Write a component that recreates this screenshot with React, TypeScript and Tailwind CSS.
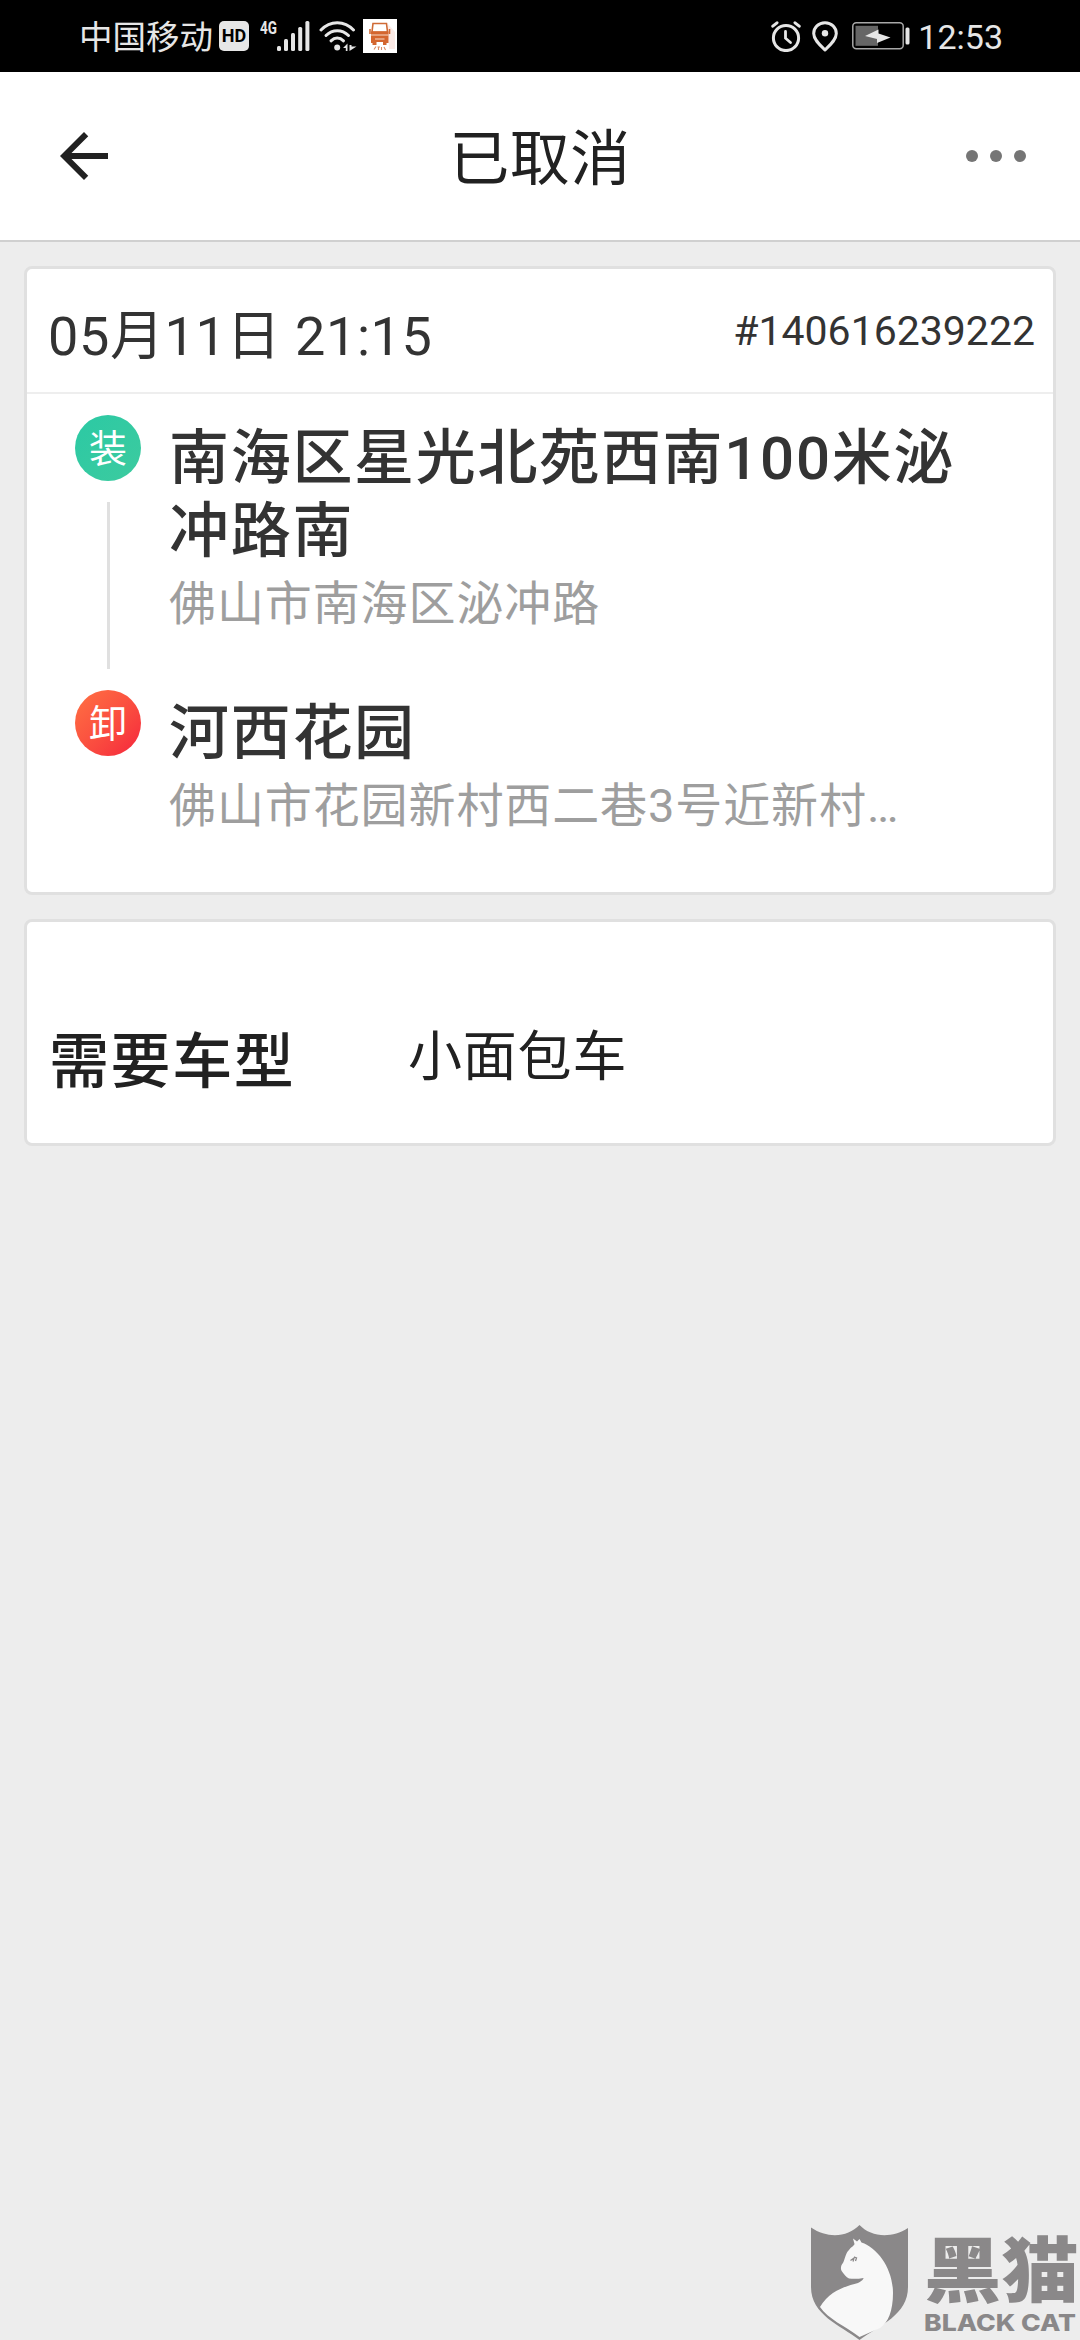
import React from 'react';

interface Stop {
  label: string;
  badgeClass: string;
  title: string;
  address: string;
}

const stops: Stop[] = [
  {
    label: '装',
    badgeClass: 'bg-linear-to-br from-[#2bc9a4] to-[#3ccb9f]',
    title: '南海区星光北苑西南100米泌冲路南',
    address: '佛山市南海区泌冲路',
  },
  {
    label: '卸',
    badgeClass: 'bg-linear-to-br from-[#ff7043] to-[#f51f3c]',
    title: '河西花园',
    address: '佛山市花园新村西二巷3号近新村…',
  },
];

const SignalIcon: React.FC = () => (
  <svg width="33" height="30" viewBox="0 0 33 30" fill="#e6e6e6">
    <rect x="0" y="25" width="4" height="5" rx="1.5" />
    <rect x="7" y="18" width="4" height="12" rx="1.5" />
    <rect x="14" y="12" width="4" height="18" rx="1.5" />
    <rect x="21.2" y="6" width="4" height="24" rx="1.5" />
    <rect x="28.4" y="0" width="4" height="30" rx="1.5" />
  </svg>
);

const WifiIcon: React.FC = () => (
  <svg width="38" height="30" viewBox="0 0 38 30" fill="none" stroke="#e6e6e6" strokeWidth="3" strokeLinecap="round">
    <path d="M2 9C11-.8 25.5-.8 34.5 9" />
    <path d="M7 14.5C13.5 8 23 8 29.5 14.5" />
    <path d="M12 19.8C15.8 16.2 20.7 16.2 24.5 19.8" />
    <circle cx="18.2" cy="26.5" r="3" fill="#e6e6e6" stroke="none" />
    <path d="M24 27L28.5 22.5V30H26.8V27ZM30.5 24V30L37.5 25.5H32.5V24Z" fill="#e6e6e6" stroke="none" />
  </svg>
);

const TruckIcon: React.FC = () => (
  <svg width="34" height="34" viewBox="0 0 34 34">
    <rect width="34" height="34" fill="#fff" />
    <path d="M25 5L32 13V30H26Z" fill="#fbeae6" />
    <path d="M10 4.5H23.5L24.5 13H9Z" fill="#fff" stroke="#cf6a35" strokeWidth="1.6" />
    <path d="M7 10V15M26.5 10V15" stroke="#cf6a35" strokeWidth="1.6" />
    <path d="M8 12.5H25.5V24H23.5V26H20V23H13.5V26H9.5V24H8Z" fill="#d4662f" />
    <path d="M8 16H25.5M12 20H21.5" stroke="#f7d9c8" strokeWidth="1" />
    <path d="M11 30.5L13 27.5M14.5 28H17M15.5 28V31M18.5 28V31M21 28L22.5 31" stroke="#d98a63" strokeWidth="1.1" />
  </svg>
);

const AlarmIcon: React.FC = () => (
  <svg width="30" height="31" viewBox="0 0 30 31" fill="none" stroke="#e6e6e6" strokeLinecap="round">
    <circle cx="15" cy="17" r="12.6" strokeWidth="3" />
    <path d="M14.5 10.5V17.2L19.5 21.5" strokeWidth="2.8" />
    <path d="M1.8 5.2L6 1.8M24 1.8L28.2 5.2" strokeWidth="3" />
  </svg>
);

const PinIcon: React.FC = () => (
  <svg width="26" height="31" viewBox="0 0 26 31" fill="none">
    <path
      d="M13 1.7C6.5 1.7 1.7 6.5 1.7 12.5C1.7 19 8.5 24.5 13 28.8C17.5 24.5 24.3 19 24.3 12.5C24.3 6.5 19.5 1.7 13 1.7Z"
      stroke="#e6e6e6"
      strokeWidth="3"
    />
    <circle cx="13" cy="12.3" r="3.2" fill="#e6e6e6" />
  </svg>
);

const BatteryIcon: React.FC = () => (
  <svg width="58" height="28" viewBox="0 0 58 28">
    <rect x="0.8" y="0.8" width="50.4" height="26" rx="3.5" fill="none" stroke="#a8a8a8" strokeWidth="1.5" />
    <rect x="3.5" y="3.8" width="22.5" height="20" fill="#666" />
    <path d="M13 14L26.5 7.5V11.5L38.5 15.5L25 21V17Z" fill="#e6e6e6" />
    <rect x="53.5" y="5.5" width="4" height="17" rx="1.5" fill="#e6e6e6" />
  </svg>
);

const StatusBar: React.FC = () => (
  <div className="flex h-[72px] items-center justify-between bg-black pr-[77px] pl-[79px] text-[#e6e6e6]">
    <div className="flex items-center">
      <span className="w-[140px] pt-[3px] text-[33.5px] leading-[72px]">中国移动</span>
      <span className="flex h-[30px] w-[30px] items-center justify-center rounded-[5px] bg-[#e6e6e6] text-[18px] leading-none font-bold text-black">
        HD
      </span>
      <span className="mb-4 ml-[11px] w-[17px] origin-left scale-x-75 text-[18px] leading-none font-bold">4G</span>
      <SignalIcon />
      <span className="ml-[9px] flex">
        <WifiIcon />
      </span>
      <span className="ml-1.5 flex">
        <TruckIcon />
      </span>
    </div>
    <div className="flex items-center">
      <AlarmIcon />
      <span className="ml-[11px] flex">
        <PinIcon />
      </span>
      <span className="ml-3.5 flex">
        <BatteryIcon />
      </span>
      <span className="ml-2 pt-0.5 text-[34px] leading-[72px]">12:53</span>
    </div>
  </div>
);

const Header: React.FC = () => (
  <header className="flex h-[170px] items-center justify-between border-b-2 border-[#d0d0d0] bg-white px-12 text-[#212121]">
    <button className="flex w-[72px]" aria-label="返回">
      <svg width="72" height="72" viewBox="0 0 24 24" fill="currentColor">
        <path d="M20 11H7.83l5.59-5.59L12 4l-8 8 8 8 1.41-1.41L7.83 13H20v-2z" />
      </svg>
    </button>
    <h1 className="pt-2 text-[60px] leading-[80px] tracking-[0.5px]">已取消</h1>
    <button className="flex w-[72px] justify-end gap-3 pr-1.5" aria-label="更多">
      <span className="h-3 w-3 shrink-0 rounded-full bg-[#757575]" />
      <span className="h-3 w-3 shrink-0 rounded-full bg-[#757575]" />
      <span className="h-3 w-3 shrink-0 rounded-full bg-[#757575]" />
    </button>
  </header>
);

const Badge: React.FC<{ stop: Stop }> = ({ stop }) => (
  <span
    className={`flex h-[66px] w-[66px] shrink-0 items-center justify-center rounded-full pt-0.5 text-[38px] leading-none text-white ${stop.badgeClass}`}
  >
    {stop.label}
  </span>
);

const OrderCard: React.FC = () => (
  <section className="h-[629px] rounded-lg border-[3px] border-[#e0e0e0] bg-white text-[#333]">
    <div className="flex h-[125px] justify-between border-b-2 border-[#eee] pr-[18px] pl-[21px]">
      <span className="pt-7 text-[54px] leading-[80px] tracking-[0.6px]">05月11日 21:15</span>
      <span className="pt-[22px] text-[41px] leading-[80px]">#140616239222</span>
    </div>
    <div className="flex">
      <div className="flex w-[142px] flex-col items-start pt-[21px] pl-12">
        <div className="flex flex-col items-center">
          <Badge stop={stops[0]} />
          <span className="my-[21px] h-[167px] w-[3px] bg-[#e0e0e0]" />
          <Badge stop={stops[1]} />
        </div>
      </div>
      <div className="w-[820px] pt-7">
        {stops.map((stop, index) => (
          <div key={stop.label} className={index === 0 ? 'h-[275px]' : ''}>
            <div className="text-[60px] leading-[73px] font-medium tracking-[1.7px]">{stop.title}</div>
            <div className="text-[47px] leading-[72px] tracking-[0.9px] text-[#9e9e9e]">{stop.address}</div>
          </div>
        ))}
      </div>
    </div>
  </section>
);

const VehicleCard: React.FC = () => (
  <section className="flex h-[227px] items-start rounded-lg border-[3px] border-[#e0e0e0] bg-white pt-[99px] pl-[22px] text-[#212121]">
    <span className="w-[359px] pt-0.5 text-[60px] leading-[80px] font-medium tracking-[1.6px]">需要车型</span>
    <span className="text-[54px] leading-[74px] tracking-[0.8px]">小面包车</span>
  </section>
);

const Watermark: React.FC = () => (
  <div className="absolute right-0 bottom-0 flex h-[120px] w-[270px] text-[#8a8889]">
    <svg className="mt-[5px] ml-px shrink-0" width="98" height="115" viewBox="0 0 98 115">
      <path d="M0 2.5C17 14 37 12 48.5 0C60 12 80 14 97 3V62C97 90 69 100 48.5 115C29 100 0 90 0 62Z" fill="currentColor" />
      <path
        d="M42 13.5L46 16.5L48.5 14L50.5 17.5C67 23 82 44 82 68C82 86 77 98 69 103L48.5 112C34 101 17 94 9 82C19 65 36 61 47 58C51 56 52.5 54 52.5 53C47 54 42 54 38 53.5C35 52.5 33 49 31 46.5C29 44 30 40 32 38C34 34 34.5 28 38 25C40 22 43 21 43.5 19Z"
        fill="#f8f8f8"
      />
      <path d="M39.5 35.5L43 33L42 36.5M43 32L45.5 33L44.5 36" fill="none" stroke="currentColor" strokeWidth="1.3" />
    </svg>
    <div className="ml-[15px] flex flex-col">
      <span className="mt-4 origin-left scale-x-[1.09] text-[71px] leading-[72px] font-black">黑猫</span>
      <span className="mt-1 origin-left scale-x-[1.13] font-['Inter'] text-[23.5px] leading-[22px] font-extrabold whitespace-nowrap">
        BLACK CAT
      </span>
    </div>
  </div>
);

const App: React.FC = () => {
  return (
    <div
      lang="zh-CN"
      className="relative h-[2340px] w-[1080px] overflow-hidden bg-[#ededed] font-['Roboto','Noto_Sans_CJK_SC',sans-serif]"
    >
      <StatusBar />
      <Header />
      <main className="flex flex-col gap-6 px-6 pt-6">
        <OrderCard />
        <VehicleCard />
      </main>
      <Watermark />
    </div>
  );
};

export default App;
